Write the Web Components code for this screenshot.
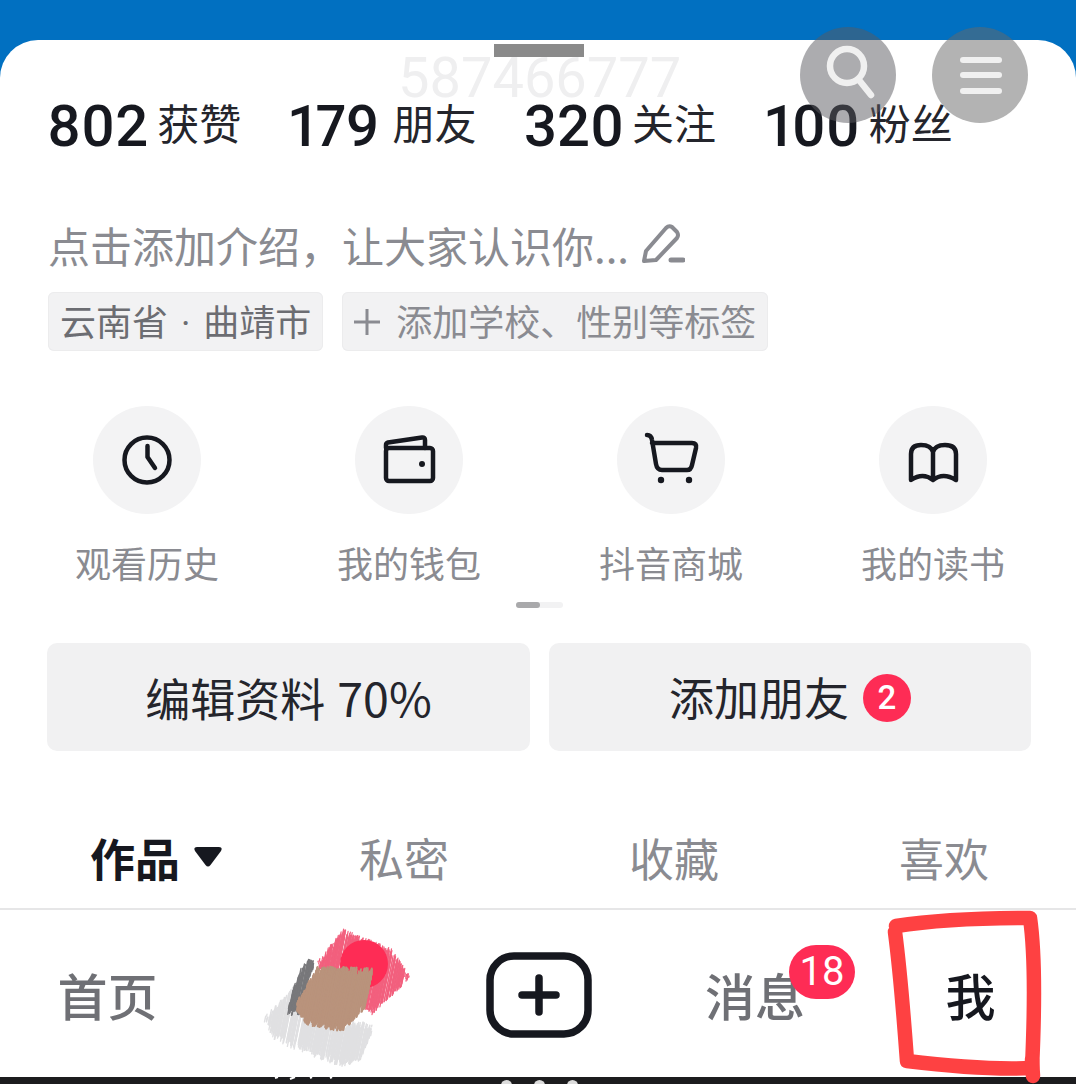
<!DOCTYPE html>
<html lang="zh">
<head>
<meta charset="utf-8">
<title>我</title>
<style>
  html, body { margin: 0; padding: 0; }
  body {
    width: 1076px;
    height: 1084px;
    overflow: hidden;
    background: #1c1c1e;
    font-family: Roboto, "Noto Sans CJK SC", sans-serif;
    color: #16181f;
  }
  profile-stats { margin-top: 58px; }
  profile-intro { margin-top: 67px; }
  tag-row { margin-top: 23px; }
  shortcut-grid { margin-top: 55px; }
  page-dots { margin-top: 17px; }
  action-row { margin-top: 35px; }
  tab-row { margin-top: 79px; }
  svg { display: block; }
</style>
</head>
<body>
<profile-sheet>
  <profile-stats>
    <stat-item count="802" label="获赞" gap="9"></stat-item>
    <stat-item count="179" label="朋友" gap="13"></stat-item>
    <stat-item count="320" label="关注" gap="8"></stat-item>
    <stat-item count="100" label="粉丝" gap="9"></stat-item>
  </profile-stats>
  <profile-intro>点击添加介绍，让大家认识你...</profile-intro>
  <tag-row>
    <tag-chip>云南省 · 曲靖市</tag-chip>
    <tag-chip plus>添加学校、性别等标签</tag-chip>
  </tag-row>
  <shortcut-grid>
    <shortcut-item label="观看历史">
      <svg viewBox="0 0 60 60" width="60" height="60" fill="none" stroke="#16181f" stroke-width="4.5" stroke-linecap="round" stroke-linejoin="round">
        <circle cx="30" cy="30" r="22.5"/><path d="M30.5 16V27L38 38"/>
      </svg>
    </shortcut-item>
    <shortcut-item label="我的钱包">
      <svg viewBox="0 0 60 60" width="60" height="60" fill="none" stroke="#16181f" stroke-width="4.5" stroke-linecap="round" stroke-linejoin="round">
        <rect x="7" y="18" width="47" height="33" rx="3"/>
        <path d="M7 18V15Q7 13 9 12.500L43 7.500Q46 7 46 10V18"/>
        <circle cx="43" cy="34" r="3" fill="#16181f" stroke="none"/>
      </svg>
    </shortcut-item>
    <shortcut-item label="抖音商城">
      <svg viewBox="0 0 60 60" width="60" height="60" fill="none" stroke="#16181f" stroke-width="4.5" stroke-linecap="round" stroke-linejoin="round">
        <path d="M6 5C9 5 10.500 6.500 11 10L15 34Q16 40 21 40H46Q50 40 51 35L55 18Q56 13 51 13H11"/>
        <circle cx="20" cy="50" r="3.200" fill="#16181f" stroke="none"/>
        <circle cx="48" cy="50" r="3.200" fill="#16181f" stroke="none"/>
      </svg>
    </shortcut-item>
    <shortcut-item label="我的读书">
      <svg viewBox="0 0 60 60" width="60" height="60" fill="none" stroke="#16181f" stroke-width="4.5" stroke-linecap="round" stroke-linejoin="round">
        <path d="M30 22Q28 15 18 15Q8 15 8 24V50Q20 42 30 50Q40 42 53 50V24Q53 15 42 15Q32 15 30 22V49"/>
      </svg>
    </shortcut-item>
  </shortcut-grid>
  <page-dots></page-dots>
  <action-row>
    <action-button>编辑资料 <span style="font-size:46.500px">70%</span></action-button>
    <action-button badge="2">添加朋友</action-button>
  </action-row>
  <tab-row>
    <tab-item active>作品</tab-item>
    <tab-item>私密</tab-item>
    <tab-item>收藏</tab-item>
    <tab-item>喜欢</tab-item>
  </tab-row>
  <bottom-nav slot="nav">
    <nav-item>首页</nav-item>
    <nav-item kind="avatar"></nav-item>
    <nav-item kind="plus"></nav-item>
    <nav-item badge="18">消息</nav-item>
    <nav-item active>我</nav-item>
  </bottom-nav>
</profile-sheet>
<gesture-bar></gesture-bar>

<script>
class ProfileSheet extends HTMLElement {
  constructor() {
    super();
    this.attachShadow({ mode: 'open' });
    this.shadowRoot.innerHTML = `
      <style>
        :host {
          display: block;
          position: relative;
          height: 1077px;
          padding-top: 40px;
          box-sizing: border-box;
          background: #0170c1;
        }
        .sheet {
          height: 100%;
          display: flex;
          flex-direction: column;
          background: #fff;
          border-radius: 38px 38px 0 0;
        }
        .body { flex: 1; display: flex; flex-direction: column; }
        .grip {
          position: absolute; left: 494px; top: 44px;
          width: 90px; height: 13px; background: #8a8a8a;
        }
        .uid {
          position: absolute; left: 398px; top: 58px;
          font: 400 56px/40px Roboto, sans-serif; color: #efeff0;
        }
        .round {
          position: absolute; top: 27px;
          width: 96px; height: 96px; border-radius: 50%;
          background: rgba(90, 90, 95, .5);
          z-index: 2;
        }
        .search { left: 800px; }
        .menu { left: 932px; background: rgba(104, 104, 104, .5); }
        .menu i {
          position: absolute; left: 28px; width: 42px; height: 6px;
          border-radius: 3px; background: #f0f0f0;
        }
        /* red pen mark from whoever took the screenshot */
        .mark { position: absolute; left: 880px; top: 900px; z-index: 3; overflow: visible; }
      </style>
      <div class="sheet">
        <div class="body"><slot></slot></div>
        <slot name="nav"></slot>
      </div>
      <div class="grip"></div>
      <div class="uid">587466777</div>
      <div class="round search">
        <svg viewBox="0 0 96 96" width="96" height="96" fill="none" stroke="#f0f0f0" stroke-width="6.500" stroke-linecap="round">
          <circle cx="47" cy="39" r="17"/><path d="M59 53L71 68"/>
        </svg>
      </div>
      <div class="round menu">
        <i style="top:30px"></i><i style="top:45px"></i><i style="top:61px"></i>
      </div>
      <svg class="mark" width="170" height="184" viewBox="0 0 170 184" fill="none" stroke="#fe4142" stroke-width="14.500" stroke-linecap="round" stroke-linejoin="round">
        <path d="M16 26C55 20 105 18 150 18C156 60 154 125 152 168C110 170 60 165 27 161C24 120 20 70 15 32"/>
        <path d="M152 160L153 176"/>
      </svg>
    `;
  }
}

class ProfileStats extends HTMLElement {
  constructor() {
    super();
    this.attachShadow({ mode: 'open' });
    this.shadowRoot.innerHTML = `
      <style>
        :host { display: grid; grid-template-columns: 242px 235px 241px auto; padding-left: 47px; }
      </style>
      <slot></slot>
    `;
  }
}

class StatItem extends HTMLElement {
  constructor() {
    super();
    this.attachShadow({ mode: 'open' });
    this.shadowRoot.innerHTML = `
      <style>
        :host { display: flex; align-items: baseline; gap: ${this.getAttribute('gap')}px; height: 56px; line-height: 56px; }
        b { font: 500 58px/56px Roboto, sans-serif; color: #16181f; font-variant-numeric: proportional-nums; }
        span { font: 400 42px/56px "Noto Sans CJK SC", sans-serif; color: #24252c; position: relative; top: -6px; }
      </style>
      <b>${this.getAttribute('count')}</b><span>${this.getAttribute('label')}</span>
    `;
  }
}

class ProfileIntro extends HTMLElement {
  constructor() {
    super();
    this.attachShadow({ mode: 'open' });
    this.shadowRoot.innerHTML = `
      <style>
        :host {
          display: flex; align-items: center; gap: 12px;
          padding-left: 48px; height: 48px;
          font: 400 42px/48px "Noto Sans CJK SC", sans-serif;
          color: #8a8b91; white-space: nowrap;
        }
        svg { position: relative; top: -1px; }
      </style>
      <span><slot></slot></span>
      <svg width="44" height="42" viewBox="0 0 44 42" fill="none" stroke="#8a8b91" stroke-width="4" stroke-linecap="round" stroke-linejoin="round">
        <path d="M3 38L5 28L25 5Q28 2 31 4L36 9Q38 12 36 15L15 37Z"/>
        <path d="M30 37H42" stroke-width="5"/>
      </svg>
    `;
  }
}

class TagRow extends HTMLElement {
  constructor() {
    super();
    this.attachShadow({ mode: 'open' });
    this.shadowRoot.innerHTML = `
      <style>
        :host { display: flex; gap: 19px; padding-left: 48px; }
      </style>
      <slot></slot>
    `;
  }
}

class TagChip extends HTMLElement {
  constructor() {
    super();
    this.attachShadow({ mode: 'open' });
    const plus = this.hasAttribute('plus');
    this.shadowRoot.innerHTML = `
      <style>
        :host {
          display: flex; align-items: center; gap: 16px;
          height: 59px; padding: 0 12px;
          box-sizing: border-box;
          border-radius: 6px;
          background: #f2f2f3;
          box-shadow: inset 0 0 0 1px #ececed;
          font: 400 36px/59px Roboto, "Noto Sans CJK SC", sans-serif;
          word-spacing: 4px;
          color: ${plus ? '#8a8b91' : '#6c6d72'};
          white-space: nowrap;
        }
        span { position: relative; top: 3px; }
      </style>
      ${plus ? `<svg width="26" height="26" viewBox="0 0 26 26" stroke="#8a8b91" stroke-width="3"><path d="M13 0V26M0 13H26"/></svg>` : ''}
      <span><slot></slot></span>
    `;
  }
}

class ShortcutGrid extends HTMLElement {
  constructor() {
    super();
    this.attachShadow({ mode: 'open' });
    this.shadowRoot.innerHTML = `
      <style>
        :host { display: grid; grid-template-columns: repeat(4, 262px); padding-left: 16px; }
      </style>
      <slot></slot>
    `;
  }
}

class ShortcutItem extends HTMLElement {
  constructor() {
    super();
    this.attachShadow({ mode: 'open' });
    this.shadowRoot.innerHTML = `
      <style>
        :host { display: flex; flex-direction: column; align-items: center; gap: 25px; }
        .disc {
          width: 108px; height: 108px; border-radius: 50%;
          background: #f3f3f4;
          display: flex; align-items: center; justify-content: center;
        }
        .label { font: 400 36px/46px "Noto Sans CJK SC", sans-serif; color: #8a8b91; white-space: nowrap; }
      </style>
      <div class="disc"><slot></slot></div>
      <div class="label">${this.getAttribute('label')}</div>
    `;
  }
}

class PageDots extends HTMLElement {
  constructor() {
    super();
    this.attachShadow({ mode: 'open' });
    this.shadowRoot.innerHTML = `
      <style>
        :host { display: flex; justify-content: center; padding-left: 3px; }
        .track { width: 47px; height: 6px; border-radius: 3px; background: #f2f2f3; }
        .thumb { width: 24px; height: 6px; border-radius: 3px; background: #a9a9ab; }
      </style>
      <div class="track"><div class="thumb"></div></div>
    `;
  }
}

class ActionRow extends HTMLElement {
  constructor() {
    super();
    this.attachShadow({ mode: 'open' });
    this.shadowRoot.innerHTML = `
      <style>
        :host { display: grid; grid-template-columns: 483px 482px; gap: 19px; padding-left: 47px; }
      </style>
      <slot></slot>
    `;
  }
}

class ActionButton extends HTMLElement {
  constructor() {
    super();
    this.attachShadow({ mode: 'open' });
    const badge = this.getAttribute('badge');
    this.shadowRoot.innerHTML = `
      <style>
        :host {
          display: flex; align-items: center; justify-content: center; gap: 14px;
          height: 108px;
          border-radius: 10px;
          background: #f1f1f2;
          font: 400 45px/108px "Noto Sans CJK SC", Roboto, sans-serif;
          word-spacing: 2px;
          color: #24252c;
        }
        .badge {
          width: 48px; height: 48px; border-radius: 50%;
          background: #fe2c55; color: #fff;
          font: 500 33px/48px Roboto, sans-serif; text-align: center;
          position: relative; top: 1px;
        }
      </style>
      <span><slot></slot></span>
      ${badge ? `<span class="badge">${badge}</span>` : ''}
    `;
  }
}

class TabRow extends HTMLElement {
  constructor() {
    super();
    this.attachShadow({ mode: 'open' });
    this.shadowRoot.innerHTML = `
      <style>
        :host { display: grid; grid-template-columns: 269px 270px 270px auto; padding-left: 90px; }
      </style>
      <slot></slot>
    `;
  }
}

class TabItem extends HTMLElement {
  constructor() {
    super();
    this.attachShadow({ mode: 'open' });
    const active = this.hasAttribute('active');
    this.shadowRoot.innerHTML = `
      <style>
        :host {
          display: flex; align-items: center; gap: 14px;
          height: 56px;
          font: ${active ? 700 : 400} 45px/56px "Noto Sans CJK SC", sans-serif;
          color: ${active ? '#16181f' : '#8a8b91'};
        }
        svg { position: relative; top: -1px; }
      </style>
      <span><slot></slot></span>
      ${active ? `<svg width="28" height="20" viewBox="0 0 28 20"><path d="M3 0H25Q29 0 27 4L16.500 18Q14 21 11.500 18L1 4Q-1 0 3 0Z" fill="#16181f"/></svg>` : ''}
    `;
  }
}

class BottomNav extends HTMLElement {
  constructor() {
    super();
    this.attachShadow({ mode: 'open' });
    this.shadowRoot.innerHTML = `
      <style>
        :host {
          display: grid;
          grid-template-columns: 215px 216px 216px 216px 213px;
          height: 169px;
          box-sizing: border-box;
          border-top: 2px solid #e6e6e7;
        }
      </style>
      <slot></slot>
    `;
  }
}

class NavItem extends HTMLElement {
  constructor() {
    super();
    this.attachShadow({ mode: 'open' });
    const kind = this.getAttribute('kind');
    const badge = this.getAttribute('badge');
    const active = this.hasAttribute('active');
    let inner = '<span class="word"><slot></slot></span>';
    if (kind === 'plus') {
      inner = `<svg class="plus" width="106" height="86" viewBox="0 0 106 86" fill="none" stroke="#16181f" stroke-linecap="round">
        <rect x="4" y="4" width="98" height="78" rx="24" stroke-width="7.500"/>
        <path d="M53 26V60M36 43H70" stroke-width="7.500"/>
      </svg>`;
    } else if (kind === 'avatar') {
      inner = '<svg class="smear" width="150" height="150" viewBox="0 0 150 150"></svg>';
    }
    this.shadowRoot.innerHTML = `
      <style>
        :host {
          display: flex; align-items: center; justify-content: center;
          position: relative;
          font: 500 50px/60px "Noto Sans CJK SC", sans-serif;
          color: ${active ? '#16181f' : '#6f7075'};
          padding-left: ${active ? 2 : 0}px;
        }
        .plus { margin-top: 2px; }
        .badge {
          position: absolute; left: 142px; top: 35px;
          min-width: 66px; height: 54px; border-radius: 27px;
          background: #fe2c55; color: #fff;
          font: 400 40px/54px Roboto, sans-serif; text-align: center;
        }
        .smear { overflow: visible; }
      </style>
      ${inner}
      ${badge ? `<span class="badge">${badge}</span>` : ''}
    `;
    if (kind === 'avatar') this.paintSmear(this.shadowRoot.querySelector('.smear'));
  }

  // the avatar in the reference was scribbled out by hand, redo it with hatching
  paintSmear(svg) {
    let seed = 11;
    const rnd = () => {
      seed = (seed * 16807) % 2147483647;
      return seed / 2147483647;
    };
    // vertical span of a polygon at x
    const span = (poly, x) => {
      const ys = [];
      poly.forEach((p, i) => {
        const q = poly[(i + 1) % poly.length];
        if ((p[0] <= x) !== (q[0] <= x)) {
          ys.push(p[1] + (q[1] - p[1]) * (x - p[0]) / (q[0] - p[0]));
        }
      });
      return ys.length ? [Math.min(...ys), Math.max(...ys)] : null;
    };
    const hatch = (poly, color, width, count) => {
      const xs = poly.map(p => p[0]);
      const x0 = Math.min(...xs), x1 = Math.max(...xs);
      let out = '';
      for (let n = 0; n < count; n++) {
        const x = x0 + (x1 - x0) * rnd();
        const s = span(poly, x);
        if (!s) continue;
        const y0 = s[0] + rnd() * 9 - 3;
        const y1 = s[1] - rnd() * 9 + 3;
        if (y1 <= y0) continue;
        const tilt = (y1 - y0) * 0.1;
        out += `<path d="M${(x + tilt).toFixed(1)} ${y0.toFixed(1)}L${(x - tilt).toFixed(1)} ${y1.toFixed(1)}" stroke="${color}" stroke-width="${width}" stroke-linecap="round"/>`;
      }
      return out;
    };
    // polygons are in page pixels, the svg box has its corner at (248,920)
    svg.innerHTML = '<g transform="translate(-248 -920)">' +
      hatch([[290,988],[265,1020],[277,1037],[304,1050],[344,1065],[364,1060],[373,1027],[308,1023]], '#e0e0e2', 1.4, 260) +
      hatch([[300,963],[314,963],[304,1015],[288,1013],[292,987]], '#78787b', 1.4, 60) +
      hatch([[338,933],[387,953],[409,978],[379,1013],[316,967]], '#f2607e', 1.2, 300) +
      '<circle cx="364" cy="965" r="24" fill="#fe2c55"/>' +
      hatch([[312,970],[372,972],[368,1007],[348,1030],[312,1023],[296,1007]], '#b9937c', 1.8, 300) +
      '<path d="M275 1079l3-1M290 1080l5-2M310 1079l2-1M330 1079l2-1" stroke="#fff" stroke-width="2"/>' +
      '</g>';
  }
}

class GestureBar extends HTMLElement {
  constructor() {
    super();
    this.attachShadow({ mode: 'open' });
    this.shadowRoot.innerHTML = `
      <style>
        :host {
          display: flex; justify-content: center; gap: 22px;
          height: 7px; padding: 3px 0 0 2px;
          box-sizing: border-box;
        }
        i { width: 11px; height: 11px; border-radius: 50%; background: #dcdcdc; flex: none; }
      </style>
      <i></i><i></i><i></i>
    `;
  }
}

customElements.define('profile-sheet', ProfileSheet);
customElements.define('profile-stats', ProfileStats);
customElements.define('stat-item', StatItem);
customElements.define('profile-intro', ProfileIntro);
customElements.define('tag-row', TagRow);
customElements.define('tag-chip', TagChip);
customElements.define('shortcut-grid', ShortcutGrid);
customElements.define('shortcut-item', ShortcutItem);
customElements.define('page-dots', PageDots);
customElements.define('action-row', ActionRow);
customElements.define('action-button', ActionButton);
customElements.define('tab-row', TabRow);
customElements.define('tab-item', TabItem);
customElements.define('bottom-nav', BottomNav);
customElements.define('nav-item', NavItem);
customElements.define('gesture-bar', GestureBar);
</script>
</body>
</html>
